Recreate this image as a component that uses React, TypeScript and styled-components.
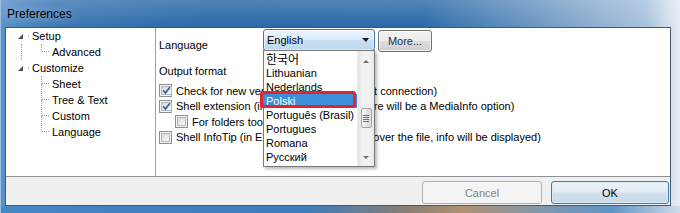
import styled, { createGlobalStyle } from "styled-components";

const GlobalStyle = createGlobalStyle`
  html, body {
    margin: 0;
    padding: 0;
    overflow: hidden;
  }

  body {
    font-family: "Liberation Sans", Arial, sans-serif;
    font-size: 11px;
    color: #000;
  }
`;

const Window = styled.div`
  width: 680px;
  height: 213px;
  box-sizing: border-box;
  display: flex;
  flex-direction: column;
  padding: 0 9px 7px 5px;
  background:
    linear-gradient(
        to right,
        #4586c6 0%,
        #3f7dbc 45%,
        #8a7e72 60%,
        #b09272 68%,
        #7f98b0 80%,
        #5f94c6 90%,
        #cfdcea 100%
      )
      bottom / 100% 7px no-repeat,
    linear-gradient(to bottom, rgba(255, 255, 255, 0.18), rgba(255, 255, 255, 0) 27px),
    linear-gradient(
      to right,
      #5b92c8 0%,
      #3b77b4 8%,
      #2a68a6 30%,
      #2b69a7 62%,
      #5d8dbd 75%,
      #88aacd 86%,
      #a8c2dc 95%,
      #e6eef6 100%
    );
  box-shadow: inset 1px 0 0 #9cc0e4;
`;

const TitleBar = styled.div`
  height: 27px;
  display: flex;
  align-items: center;
  padding-left: 2px;
  font-size: 12px;
  text-shadow: 0 0 8px rgba(255, 255, 255, 0.55);
`;

const Client = styled.div`
  flex: 1;
  display: flex;
  flex-direction: column;
  border: 1px solid #44596f;
  background: #f0f0f0;
`;

const Main = styled.div`
  height: 148px;
  display: flex;
  background: #fff;
  border-bottom: 1px solid #8d9299;
`;

/* ---- tree ---- */

const Tree = styled.div`
  width: 149px;
  flex: none;
  border-right: 1px solid #a0a0a0;
`;

const NodeRow = styled.div`
  height: 16px;
  display: flex;
  align-items: center;
  padding-left: 12px;
`;

const Expander = styled.span`
  width: 0;
  height: 0;
  border-left: 5px solid transparent;
  border-bottom: 5px solid #4f4f4f;
`;

const Stub = styled.span`
  width: 1px;
  height: 1px;
  margin-left: 5px;
  background: #8a8a8a;
`;

const Rail = styled.span<{ $show: boolean }>`
  align-self: stretch;
  width: 19px;
  margin-left: 3px;
  border-left: 1px dotted ${(p) => (p.$show ? "#a0a0a0" : "transparent")};
`;

const Elbow = styled.span`
  align-self: stretch;
  width: 8px;
  display: flex;
  flex-direction: column;
`;

const ElbowTop = styled.span`
  height: 8px;
  box-sizing: border-box;
  border-left: 1px dotted #a0a0a0;
  border-bottom: 1px dotted #a0a0a0;
`;

const ElbowBottom = styled.span<{ $last: boolean }>`
  flex: 1;
  border-left: 1px dotted ${(p) => (p.$last ? "transparent" : "#a0a0a0")};
`;

const NodeText = styled.span`
  margin-left: 3px;
  line-height: 16px;
  white-space: nowrap;
`;

/* ---- settings ---- */

const Settings = styled.div`
  flex: 1;
  padding: 1px 0 0 3px;
`;

const LangRow = styled.div`
  display: flex;
  align-items: flex-start;
`;

const FieldLabel = styled.span`
  width: 104px;
  margin-top: 8px;
  line-height: 16px;
`;

const ComboWrap = styled.div`
  position: relative;
  z-index: 2;
`;

const Combo = styled.div`
  width: 112px;
  height: 22px;
  box-sizing: border-box;
  display: flex;
  align-items: center;
  padding: 0 5px 0 3px;
  border: 1px solid #3c7fb1;
  border-radius: 3px;
  background: linear-gradient(#edf5fc 0%, #dcebf8 48%, #c9e0f4 52%, #bdd8ef 100%);
  box-shadow: inset 0 0 0 1px rgba(255, 255, 255, 0.5);
`;

const ComboArrow = styled.span`
  margin-left: auto;
  width: 0;
  height: 0;
  border-left: 4px solid transparent;
  border-right: 3px solid transparent;
  border-top: 4px solid #1c1c1c;
`;

const DropList = styled.div`
  position: absolute;
  top: 21px;
  left: 0;
  width: 112px;
  height: 117px;
  box-sizing: border-box;
  display: flex;
  border: 1px solid #7a7a7a;
  background: #fff;
  box-shadow: 2px 2px 3px rgba(0, 0, 0, 0.28);
`;

const Items = styled.div`
  flex: 1;
  padding-top: 1px;
`;

const Item = styled.div<{ $selected?: boolean; $cjk?: boolean }>`
  position: relative;
  height: 14px;
  line-height: 14px;
  padding-left: 2px;
  white-space: nowrap;
  font-family: ${(p) =>
    p.$cjk
      ? `"Noto Sans CJK KR", "Liberation Sans", sans-serif`
      : `"Liberation Sans", Arial, sans-serif`};
  font-size: ${(p) => (p.$cjk ? "12px" : "11px")};
  background: ${(p) => (p.$selected ? "#3d8fd9" : "transparent")};
  color: ${(p) => (p.$selected ? "#fff" : "#000")};
`;

const Callout = styled.span`
  position: absolute;
  top: -3px;
  left: -4px;
  right: 1px;
  bottom: 0;
  border: 3px solid #e5232a;
  border-radius: 3px;
`;

const ScrollBar = styled.div`
  width: 16px;
  display: flex;
  flex-direction: column;
  align-items: center;
  background: linear-gradient(to right, #e4e4e4, #f2f2f2 30%, #f2f2f2 70%, #e8e8e8);
  border-left: 1px solid #ececec;
`;

const ScrollArrow = styled.div<{ $down?: boolean }>`
  height: 17px;
  width: 100%;
  display: flex;
  align-items: center;
  justify-content: center;
  padding-top: ${(p) => (p.$down ? "0" : "3px")};
  box-sizing: border-box;

  &::after {
    content: "";
    width: 0;
    height: 0;
    border-left: 3px solid transparent;
    border-right: 3px solid transparent;
    ${(p) =>
      p.$down ? "border-top: 3px solid #707070;" : "border-bottom: 3px solid #707070;"}
  }
`;

const Track = styled.div`
  flex: 1;
  width: 100%;
  display: flex;
  justify-content: center;
`;

const Thumb = styled.div`
  margin-top: 40px;
  width: 11px;
  height: 20px;
  box-sizing: border-box;
  display: flex;
  align-items: center;
  justify-content: center;
  border: 1px solid #a3a3a3;
  border-radius: 2px;
  background: linear-gradient(to right, #f6f6f6, #ececec 50%, #dcdcdc 51%, #dedede);
`;

const Grip = styled.span`
  width: 6px;
  height: 7px;
  background: repeating-linear-gradient(to bottom, #6f6f6f 0 1px, transparent 1px 2px);
`;

const Button = styled.button<{ $w: number; $kind?: "default" | "disabled" }>`
  width: ${(p) => p.$w}px;
  height: ${(p) => (p.$kind ? 23 : 22)}px;
  padding: 0;
  box-sizing: border-box;
  font-family: "Liberation Sans", Arial, sans-serif;
  font-size: 11px;
  border-radius: 3px;
  border: 1px solid
    ${(p) =>
      p.$kind === "default" ? "#3c7fb1" : p.$kind === "disabled" ? "#adb2b5" : "#707070"};
  color: ${(p) =>
    p.$kind === "disabled" ? "#838383" : p.$kind === "default" ? "#000" : "#1f2f50"};
  background: ${(p) =>
    p.$kind === "disabled"
      ? "#f4f4f4"
      : p.$kind === "default"
        ? "linear-gradient(#edf3f8 0%, #e3ecf4 48%, #d3e0ec 52%, #c8d9e8 100%)"
        : "linear-gradient(#f2f2f2 0%, #ebebeb 48%, #dddddd 52%, #cfcfcf 100%)"};
  box-shadow: ${(p) =>
    p.$kind === "disabled"
      ? "none"
      : p.$kind === "default"
        ? "inset 0 0 0 1px rgba(214, 238, 252, 0.95)"
        : "inset 0 0 0 1px rgba(255, 255, 255, 0.7)"};
`;

const MoreButton = styled(Button)`
  margin: 1px 0 0 3px;
`;

const SectionLabel = styled.div`
  margin-top: 10px;
  line-height: 16px;
`;

const Options = styled.div`
  margin-top: 4px;
`;

const OptionRow = styled.div<{ $indent?: boolean }>`
  height: 15.5px;
  display: flex;
  align-items: center;
  gap: 4px;
  padding-left: ${(p) => (p.$indent ? 16 : 0)}px;
  white-space: nowrap;
`;

/* the stretch of a label that the open language list hides */
const Covered = styled.span<{ $squeeze: number }>`
  letter-spacing: ${(p) => -p.$squeeze}px;
`;

const Box = styled.span`
  width: 13px;
  height: 13px;
  flex: none;
  box-sizing: border-box;
  display: flex;
  padding: 1px;
  border: 1px solid #8f8f8f;
  background: #f4f4f4;
`;

const BoxFace = styled.span`
  flex: 1;
  display: flex;
  align-items: center;
  justify-content: center;
  border: 1px solid #b4b9bf;
  background: linear-gradient(135deg, #d2d5d9 0%, #eceef0 60%, #fbfbfb 100%);
`;

const Footer = styled.div`
  flex: 1;
  display: flex;
  justify-content: flex-end;
  align-items: flex-start;
  gap: 9px;
  padding: 4px 1px 0 0;
`;

const tree = [
  { label: "Setup", children: ["Advanced"] },
  { label: "Customize", children: ["Sheet", "Tree & Text", "Custom", "Language"] },
];

const languages = [
  "한국어",
  "Lithuanian",
  "Nederlands",
  "Polski",
  "Português (Brasil)",
  "Portugues",
  "Romana",
  "Русский",
];

type Option = {
  head: string;
  covered?: string;
  tail?: string;
  squeeze?: number;
  checked: boolean;
  indent?: boolean;
};

const options: Option[] = [
  {
    head: "Check for new ve",
    covered: "rsions (requires Interne",
    tail: "t connection)",
    checked: true,
  },
  {
    head: "Shell extension (i",
    covered: "n Explorer, right click, the",
    tail: "re will be a MediaInfo option)",
    squeeze: 0.32,
    checked: true,
  },
  { head: "For folders too", checked: false, indent: true },
  {
    head: "Shell InfoTip (in Ex",
    covered: "plorer, move the mouse ",
    tail: "over the file, info will be displayed)",
    squeeze: 0.55,
    checked: false,
  },
];

const CheckBox = ({ checked }: { checked: boolean }) => (
  <Box>
    <BoxFace>
      {checked && (
        <svg width="9" height="9" viewBox="0 0 9 9" style={{ flex: "none" }}>
          <path
            d="M1.3 4.4 L3.5 7 L7.8 1.2"
            fill="none"
            stroke="#3b5a96"
            strokeWidth="1.7"
          />
        </svg>
      )}
    </BoxFace>
  </Box>
);

export default function App() {
  return (
    <>
      <GlobalStyle />
      <Window>
        <TitleBar>Preferences</TitleBar>

        <Client>
          <Main>
            <Tree>
              {tree.map((node, gi) => (
                <div key={node.label}>
                  <NodeRow>
                    <Expander />
                    <Stub />
                    <NodeText>{node.label}</NodeText>
                  </NodeRow>
                  {node.children.map((child, ci) => (
                    <NodeRow key={child}>
                      <Rail $show={gi < tree.length - 1} />
                      <Elbow>
                        <ElbowTop />
                        <ElbowBottom $last={ci === node.children.length - 1} />
                      </Elbow>
                      <NodeText>{child}</NodeText>
                    </NodeRow>
                  ))}
                </div>
              ))}
            </Tree>

            <Settings>
              <LangRow>
                <FieldLabel>Language</FieldLabel>
                <ComboWrap>
                  <Combo>
                    English
                    <ComboArrow />
                  </Combo>
                  <DropList>
                    <Items>
                      {languages.map((lang, i) => (
                        <Item key={lang} $selected={lang === "Polski"} $cjk={i === 0}>
                          {lang}
                          {lang === "Polski" && <Callout />}
                        </Item>
                      ))}
                    </Items>
                    <ScrollBar>
                      <ScrollArrow />
                      <Track>
                        <Thumb>
                          <Grip />
                        </Thumb>
                      </Track>
                      <ScrollArrow $down />
                    </ScrollBar>
                  </DropList>
                </ComboWrap>
                <MoreButton $w={54}>More...</MoreButton>
              </LangRow>

              <SectionLabel>Output format</SectionLabel>

              <Options>
                {options.map((o) => (
                  <OptionRow key={o.head} $indent={o.indent}>
                    <CheckBox checked={o.checked} />
                    <span>
                      {o.head}
                      {o.covered && <Covered $squeeze={o.squeeze ?? 0}>{o.covered}</Covered>}
                      {o.tail}
                    </span>
                  </OptionRow>
                ))}
              </Options>
            </Settings>
          </Main>

          <Footer>
            <Button $w={120} $kind="disabled">
              Cancel
            </Button>
            <Button $w={118} $kind="default">
              OK
            </Button>
          </Footer>
        </Client>
      </Window>
    </>
  );
}
